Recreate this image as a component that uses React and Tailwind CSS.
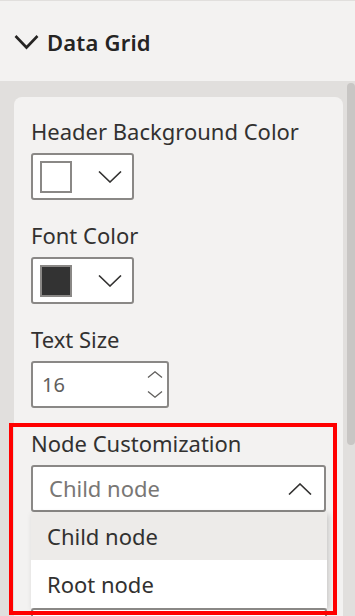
const Chevron = ({ up, className }) => (
  <svg className={className} viewBox="0 0 24 12" fill="none" stroke="currentColor" strokeWidth="1.6">
    {up ? <path d="M1 11.5 L12 1 L23 11.5" /> : <path d="M1 0.5 L12 11 L23 0.5" />}
  </svg>
);

function Label({ children, first }) {
  return (
    <div className={(first ? "" : "mt-[21px] ") + "text-[22px] leading-[28px] text-[#323130]"}>
      {children}
    </div>
  );
}

function ColorPicker({ swatch }) {
  return (
    <div className="mt-[8px] w-[103px] h-[47px] rounded-[3px] border-2 border-[#8a8886] bg-white flex items-center pl-[7px]">
      <div className={"w-[32px] h-[32px] border-2 border-[#8a8886] " + swatch} />
      <Chevron className="ml-[26px] w-[24px] h-[12px] text-[#323130]" />
    </div>
  );
}

export default function App() {
  return (
    <div
      className="relative w-[355px] h-[616px] overflow-hidden bg-[#f3f2f1] flex flex-col"
      style={{ fontFamily: '"Noto Sans", "Open Sans", sans-serif' }}
    >
      {/* section header */}
      <div className="h-[81px] shrink-0 border-t border-[#e1dfdd] flex items-center pl-[14px] pt-[2px]">
        <svg className="w-[25px] h-[16px] text-[#252423]" viewBox="0 0 25 16" fill="none" stroke="currentColor" strokeWidth="2.6">
          <path d="M1.5 2 L12.5 13.5 L23.5 2" />
        </svg>
        <span className="ml-[8px] text-[22px] font-semibold text-[#252423] tracking-[0.2px]">Data Grid</span>
      </div>

      {/* body */}
      <div className="flex-1 flex bg-[#e1dfdd]">
        <div className="flex-1 pl-[14px] pr-[4px] pt-[16px]">
          <div className="rounded-lg bg-[#f3f2f1] pl-[17px] pr-[16px] pt-[20px] pb-6">
            <Label first>Header Background Color</Label>
            <ColorPicker swatch="bg-white" />

            <Label>Font Color</Label>
            <ColorPicker swatch="bg-[#333333]" />

            <Label>Text Size</Label>
            <div className="mt-[8px] w-[138px] h-[47px] rounded-[3px] border-2 border-[#8a8886] bg-white flex items-center pl-[9px] pr-[4px]">
              <span className="flex-1 text-[20px] text-[#605e5c]">16</span>
              <div className="flex flex-col gap-[13px] text-[#605e5c]">
                <svg className="w-[16px] h-[7px]" viewBox="0 0 16 7" fill="none" stroke="currentColor" strokeWidth="1.3"><path d="M1 6.5 L8 0.8 L15 6.5" /></svg>
                <svg className="w-[16px] h-[7px]" viewBox="0 0 16 7" fill="none" stroke="currentColor" strokeWidth="1.3"><path d="M1 0.5 L8 6.2 L15 0.5" /></svg>
              </div>
            </div>

            <Label>Node Customization</Label>
            <div className="mt-[8px] w-[295px] h-[47px] rounded-[3px] border-2 border-[#8a8886] bg-white flex items-center pl-[16px] pr-[12px]">
              <span className="flex-1 text-[22px] text-[#797775]">Child node</span>
              <Chevron up className="w-[24px] h-[12px] text-[#323130]" />
            </div>
            <div className="w-[296px] bg-white shadow-[2px_2px_6px_rgba(0,0,0,0.18)] text-[22px] text-[#323130]">
              <div className="h-[48px] bg-[#edebe9] flex items-center pl-[16px]">Child node</div>
              <div className="h-[48px] flex items-center pl-[16px]">Root node</div>
            </div>
            <div className="w-[296px] h-[47px] rounded-[3px] border-2 border-[#8a8886] bg-white" />
          </div>
        </div>
        {/* scrollbar */}
        <div className="w-[9px] pt-[2px]">
          <div className="h-[362px] rounded-full bg-[#c8c6c4]" />
        </div>
      </div>

      {/* highlight annotation */}
      <div className="absolute left-[9px] top-[423px] w-[328px] h-[192px] border-[4px] border-[#ff0000]" />
    </div>
  );
}
